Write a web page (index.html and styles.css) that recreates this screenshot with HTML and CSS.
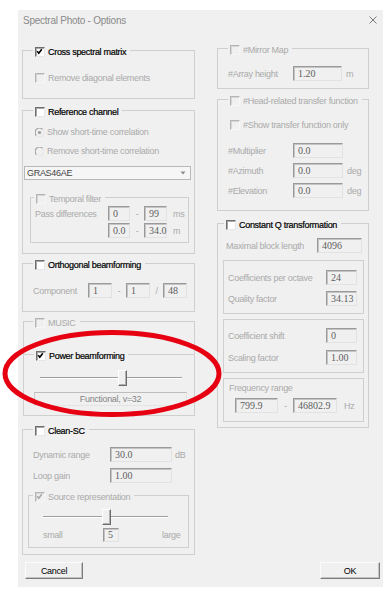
FILE: index.html
```html
<!DOCTYPE html>
<html>
<head>
<meta charset="utf-8">
<title>Spectral Photo - Options</title>
<link rel="stylesheet" href="styles.css">
</head>
<body>
<div class="dialog">
  <div class="titlebar">
    <span class="title">Spectral Photo - Options</span>
    <svg class="close" viewBox="0 0 8 8"><path d="M0.5 0.5L7.5 7.5M7.5 0.5L0.5 7.5"/></svg>
  </div>
  <div class="body">
    <div class="col-left">
      <div class="grp g-cross">
        <div class="legend ml10"><span class="cb"><svg class="tick" viewBox="0 0 8 8"><path d="M1.2 3.2L2.8 5.2L5.8 1.2"/></svg></span><span class="on">Cross spectral matrix</span></div>
        <div class="row opt r-remove"><span class="cb dis"></span><span class="dim">Remove diagonal elements</span></div>
      </div>

      <div class="grp g-ref">
        <div class="legend ml10"><span class="cb"></span><span class="on">Reference channel</span></div>
        <div class="row opt r-radio1">
          <svg class="radio" viewBox="0 0 9 9"><path class="rd-dark" d="M7.6 1.4A4 4 0 0 0 1.4 7.6"/><path class="rd-light" d="M1.4 7.6A4 4 0 0 0 7.6 1.4"/><circle class="rd-dot" cx="4.5" cy="4.5" r="1.6"/></svg>
          <span class="dim">Show short-time correlation</span>
        </div>
        <div class="row opt r-radio2">
          <svg class="radio" viewBox="0 0 9 9"><path class="rd-dark" d="M7.6 1.4A4 4 0 0 0 1.4 7.6"/><path class="rd-light" d="M1.4 7.6A4 4 0 0 0 7.6 1.4"/></svg>
          <span class="dim">Remove short-time correlation</span>
        </div>
        <div class="combo"><span>GRAS46AE</span><svg class="arrow" viewBox="0 0 6 4"><path d="M0.5 0.5H5.5L3 3.5Z"/></svg></div>
        <div class="grp g-temporal">
          <div class="legend ml3"><span class="cb dis"></span><span class="dim">Temporal filter</span></div>
          <div class="row r-pass1">
            <span class="lbl dim w73">Pass differences</span>
            <span class="inp w22">0</span><span class="sep w14 dim">-</span><span class="inp w23">99</span><span class="unit dim ml6">ms</span>
          </div>
          <div class="row r-pass2">
            <span class="lbl w73"></span>
            <span class="inp w22">0.0</span><span class="sep w14 dim">-</span><span class="inp w23">34.0</span><span class="unit dim ml6">m</span>
          </div>
        </div>
      </div>

      <div class="grp g-orth">
        <div class="legend ml10"><span class="cb"></span><span class="on">Orthogonal beamforming</span></div>
        <div class="row r-comp">
          <span class="lbl dim w55">Component</span>
          <span class="inp w24">1</span><span class="sep w14 dim">-</span><span class="inp w24">1</span><span class="sep w13 dim">/</span><span class="inp w24">48</span>
        </div>
      </div>

      <div class="grp g-music">
        <div class="legend ml9"><span class="cb dis"></span><span class="dim">MUSIC</span></div>
        <div class="grp g-power">
          <div class="legend ml10"><span class="cb"><svg class="tick" viewBox="0 0 8 8"><path d="M1.2 3.2L2.8 5.2L5.8 1.2"/></svg></span><span class="on">Power beamforming</span></div>
          <div class="slider s-power"><span class="thumb t-power"></span></div>
          <div class="textbox">Functional, v=32</div>
        </div>
      </div>

      <div class="grp g-clean">
        <div class="legend ml10"><span class="cb"></span><span class="on">Clean-SC</span></div>
        <div class="row r-dyn">
          <span class="lbl dim w77">Dynamic range</span>
          <span class="inp w62">30.0</span><span class="unit dim ml3">dB</span>
        </div>
        <div class="row r-loop">
          <span class="lbl dim w77">Loop gain</span>
          <span class="inp w62">1.00</span>
        </div>
        <div class="grp g-source">
          <div class="legend ml4"><span class="cb dis"><svg class="tick dis" viewBox="0 0 8 8"><path d="M1.2 3.2L2.8 5.2L5.8 1.2"/></svg></span><span class="dim">Source representation</span></div>
          <div class="slider s-source"><span class="thumb t-source"></span></div>
          <div class="row r-small">
            <span class="lbl dim w60">small</span>
            <span class="inp small-inp w16">5</span>
            <span class="dim ml43">large</span>
          </div>
        </div>
      </div>
    </div>

    <div class="col-right">
      <div class="grp g-mirror">
        <div class="legend ml10"><span class="cb dis"></span><span class="dim">#Mirror Map</span></div>
        <div class="row r-array">
          <span class="lbl dim w65">#Array height</span>
          <span class="inp w49">1.20</span><span class="unit dim ml4">m</span>
        </div>
      </div>

      <div class="grp g-hrtf">
        <div class="legend ml10"><span class="cb dis"></span><span class="dim">#Head-related transfer function</span></div>
        <div class="row opt r-show"><span class="cb dis"></span><span class="dim">#Show transfer function only</span></div>
        <div class="row r-mult">
          <span class="lbl dim w65">#Multiplier</span>
          <span class="inp w50">0.0</span>
        </div>
        <div class="row r-azi">
          <span class="lbl dim w65">#Azimuth</span>
          <span class="inp w50">0.0</span><span class="unit dim ml4">deg</span>
        </div>
        <div class="row r-ele">
          <span class="lbl dim w65">#Elevation</span>
          <span class="inp w50">0.0</span><span class="unit dim ml4">deg</span>
        </div>
      </div>

      <div class="grp g-cq">
        <div class="legend ml6"><span class="cb"></span><span class="on">Constant Q transformation</span></div>
        <div class="row r-maxblock">
          <span class="lbl dim w91">Maximal block length</span>
          <span class="inp w45">4096</span>
        </div>
        <div class="grp g-sub g-sub1">
          <div class="row r-sub r-cpo">
            <span class="lbl dim w98">Coefficients per octave</span>
            <span class="inp w31">24</span>
          </div>
          <div class="row r-sub r-qf">
            <span class="lbl dim w98">Quality factor</span>
            <span class="inp w31">34.13</span>
          </div>
        </div>
        <div class="grp g-sub g-sub2">
          <div class="row r-sub r-cs">
            <span class="lbl dim w98">Coefficient shift</span>
            <span class="inp w31">0</span>
          </div>
          <div class="row r-sub r-sf">
            <span class="lbl dim w98">Scaling factor</span>
            <span class="inp w31">1.00</span>
          </div>
        </div>
        <div class="grp g-sub g-sub3">
          <div class="freq-label dim">Frequency range</div>
          <div class="row r-freq">
            <span class="inp w43">799.9</span><span class="sep w15 dim">-</span><span class="inp w44">46802.9</span><span class="unit dim ml7">Hz</span>
          </div>
        </div>
      </div>
    </div>
  </div>
  <div class="buttons">
    <button class="btn btn-cancel">Cancel</button>
    <button class="btn btn-ok">OK</button>
  </div>
</div>
<svg class="annotation" viewBox="0 0 230 110" width="230" height="110"><ellipse cx="112" cy="53.5" rx="107" ry="41"/></svg>
</body>
</html>
```

FILE: styles.css
```css
* { box-sizing: border-box; }

body {
  margin: 0;
  background: #ffffff;
  font-family: "Liberation Sans", Arial, sans-serif;
  font-size: 9px;
  letter-spacing: -0.3px;
  color: #111;
}

.dialog {
  margin: 10px 0 0 18px;
  width: 365px;
  height: 577px;
  background: #f0f0f0;
  display: flex;
  flex-direction: column;
}

.titlebar {
  height: 20px;
  display: flex;
  align-items: center;
  justify-content: space-between;
  padding: 0 6px 0 5px;
}
.title { font-size: 10px; letter-spacing: -0.25px; color: #8a8a8a; }
.close { width: 8px; height: 8px; }
.close path { stroke: #7a7a7a; stroke-width: 1; fill: none; }

.body { display: flex; align-items: flex-start; padding-left: 4px; }
.col-left { width: 173px; }
.col-right { width: 152px; margin-left: 22px; }

.grp { border: 1px solid #cfcfcf; }

.legend {
  display: flex;
  align-items: center;
  gap: 3px;
  height: 12px;
  margin-top: -5px;
  padding: 0 4px 0 2px;
  width: max-content;
  background: #f0f0f0;
}
.on { color: #000; -webkit-text-stroke: 0.2px #000; }
.ml3 { margin-left: 3px; }
.ml4 { margin-left: 4px; }
.ml6 { margin-left: 6px; }
.ml7 { margin-left: 7px; }
.ml9 { margin-left: 9px; }
.ml10 { margin-left: 10px; }
.ml43 { margin-left: 43px; }

.dim { color: #aaaaaa; }

.row { display: flex; align-items: center; height: 15px; }
.opt { gap: 3px; height: 14px; padding-left: 12px; }
.lbl { flex: none; white-space: nowrap; }
.unit { flex: none; }
.sep { flex: none; text-align: center; }

.w13 { width: 13px; } .w14 { width: 14px; } .w15 { width: 15px; } .w16 { width: 16px; }
.w22 { width: 22px; } .w23 { width: 23px; } .w24 { width: 24px; } .w31 { width: 31px; }
.w43 { width: 43px; } .w44 { width: 44px; } .w45 { width: 45px; } .w49 { width: 49px; }
.w50 { width: 50px; } .w55 { width: 55px; } .w60 { width: 60px; } .w62 { width: 62px; }
.w65 { width: 65px; } .w73 { width: 73px; } .w77 { width: 77px; } .w91 { width: 91px; }
.w98 { width: 98px; }

/* checkbox */
.cb {
  flex: none;
  width: 10px;
  height: 10px;
  border: 1px solid;
  border-color: #6e6e6e #e6e6e6 #e6e6e6 #6e6e6e;
  background: #ffffff;
  box-shadow: inset 1px 1px 0 #a8a8a8;
}
.cb.dis {
  background: #f0f0f0;
  border-color: #b4b4b4 #f6f6f6 #f6f6f6 #b4b4b4;
  box-shadow: inset 1px 1px 0 #d6d6d6;
}
.tick { display: block; width: 8px; height: 8px; }
.tick path { stroke: #000; stroke-width: 1.6; fill: none; }
.tick.dis path { stroke: #a8a8a8; }

/* radio */
.radio { flex: none; width: 9px; height: 9px; }
.rd-dark { stroke: #a4a4a4; stroke-width: 1.3; fill: none; }
.rd-light { stroke: #e6e6e6; stroke-width: 1.3; fill: none; }
.rd-dot { fill: #9a9a9a; }

/* inputs */
.inp {
  flex: none;
  height: 15px;
  display: flex;
  align-items: center;
  padding: 0 0 1px 4px;
  border: 1px solid;
  border-color: #9a9a9a #e2e2e2 #e2e2e2 #9a9a9a;
  box-shadow: inset 1px 1px 0 #c4c4c4;
  background: #f0f0f0;
  font-family: "Liberation Serif", "Times New Roman", serif;
  font-size: 10px;
  letter-spacing: 0;
  color: #5e5e5e;
  white-space: nowrap;
}
.small-inp { height: 14px; }

.combo {
  margin: 8px 0 0 1px;
  width: 167px;
  height: 14px;
  border: 1px solid #b8b8b8;
  background: #f6f6f6;
  display: flex;
  align-items: center;
  justify-content: space-between;
  padding: 0 4px 0 2px;
  color: #444;
}
.arrow { width: 6px; height: 4px; }
.arrow path { fill: #8a8a8a; }

/* slider */
.slider {
  display: flex;
  height: 16px;
  background: linear-gradient(to bottom, transparent 7px, #9e9e9e 7px, #9e9e9e 8px, #ffffff 8px, #ffffff 9px, transparent 9px);
}
.thumb {
  width: 9px;
  height: 16px;
  background: #f0f0f0;
  border: 1px solid;
  border-color: #ffffff #6c6c6c #6c6c6c #ffffff;
  box-shadow: inset -1px -1px 0 #b0b0b0;
}
.s-power { margin: 8px 0 0 16px; width: 142px; }
.t-power { margin-left: 78px; }
.s-source { margin: 6px 0 0 14px; width: 125px; }
.t-source { margin-left: 59px; }

.textbox {
  margin: 6px 0 0 10px;
  width: 153px;
  height: 14px;
  border: 1px solid;
  border-color: #bdbdbd #e4e4e4 #e4e4e4 #cccccc;
  display: flex;
  align-items: center;
  justify-content: center;
  color: #868686;
}

/* left column groups */
.g-cross { margin-top: 20px; height: 49px; }
.r-remove { margin-top: 13px; }

.g-ref { margin-top: 11px; height: 144px; }
.r-radio1 { margin-top: 7px; }
.r-radio2 { margin-top: 5px; }
.g-temporal { margin: 17px 0 0 7px; width: 159px; height: 46px; }
.r-pass1 { margin-top: 1px; padding-left: 4px; }
.r-pass2 { margin-top: 2px; padding-left: 4px; }

.g-orth { margin-top: 9px; height: 49px; }
.r-comp { margin-top: 12px; padding-left: 10px; }

.g-music { margin: 9px 0 0 1px; width: 172px; height: 95px; }
.g-power { margin: 25px -1px 0 -1px; height: 62px; }

.g-clean { margin-top: 13px; height: 126px; }
.r-dyn { margin-top: 10px; padding-left: 10px; }
.r-loop { margin-top: 6px; padding-left: 10px; }
.g-source { margin: 12px 0 0 5px; width: 161px; height: 53px; }
.r-small { margin-top: 3px; height: 14px; padding-left: 14px; }

/* right column groups */
.g-mirror { margin-top: 18px; height: 41px; }
.r-array { margin-top: 10px; padding-left: 10px; }

.g-hrtf { margin-top: 10px; height: 112px; }
.r-show { margin-top: 11px; }
.r-mult { margin-top: 11px; padding-left: 10px; }
.r-azi, .r-ele { margin-top: 5px; padding-left: 10px; }

.g-cq { margin-top: 12px; height: 205px; }
.r-maxblock { margin-top: 7px; padding-left: 8px; }
.g-sub { margin: 5px 0 0 5px; width: 141px; height: 54px; }
.g-sub1 { margin-top: 7px; }
.r-sub { padding-left: 4px; }
.r-cpo { margin-top: 9px; }
.r-qf { margin-top: 6px; }
.r-cs { margin-top: 8px; }
.r-sf { margin-top: 7px; }
.g-sub3 { height: 44px; }
.freq-label { margin-top: 3px; height: 12px; line-height: 12px; padding-left: 5px; }
.r-freq { margin-top: 4px; padding-left: 11px; }

/* buttons */
.buttons {
  display: flex;
  justify-content: space-between;
  margin-top: 7px;
  padding: 0 3px 0 7px;
}
.btn {
  height: 17px;
  padding: 0;
  border: 1px solid;
  border-color: #fbfbfb #7c7c7c #7c7c7c #fbfbfb;
  box-shadow: inset -1px -1px 0 #c4c4c4;
  background: #f0f0f0;
  font-family: "Liberation Sans", Arial, sans-serif;
  font-size: 9px;
  letter-spacing: -0.3px;
  color: #000;
}
.btn-cancel { width: 58px; }
.btn-ok { width: 60px; }

/* annotation overlay */
.annotation {
  position: absolute;
  left: 0;
  top: 320px;
  pointer-events: none;
}
.annotation ellipse { fill: none; stroke: #e60012; stroke-width: 5; }
```
